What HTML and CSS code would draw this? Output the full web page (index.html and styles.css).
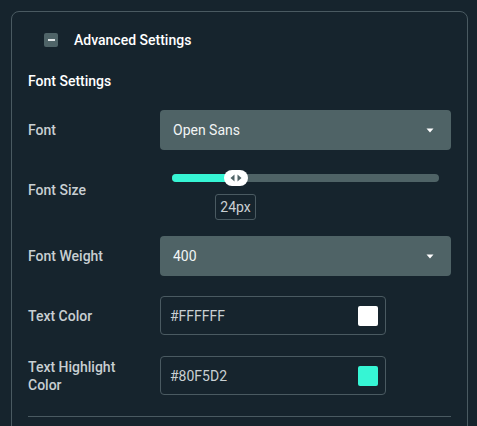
FILE: index.html
```html
<!DOCTYPE html>
<html lang="en">
<head>
<meta charset="utf-8">
<title>Advanced Settings</title>
<link rel="stylesheet" href="styles.css">
</head>
<body>
<section class="panel">
  <div class="panel-header">
    <span class="collapse-box"><span class="collapse-minus"></span></span>
    <span class="panel-title">Advanced Settings</span>
  </div>
  <h3 class="group-title">Font Settings</h3>

  <div class="row row-font">
    <label class="row-label">Font</label>
    <div class="select">
      <span class="select-value">Open Sans</span>
      <svg class="caret" width="8" height="5" viewBox="0 0 8 5"><path d="M0.5 0.5h7L4 4.5z" fill="#ffffff"/></svg>
    </div>
  </div>

  <div class="row row-size">
    <label class="row-label label-size">Font Size</label>
    <div class="slider">
      <div class="track">
        <div class="track-fill" style="width: 62px"></div>
        <div class="thumb" style="left: 52px">
          <svg width="12" height="8" viewBox="0 0 12 8"><path d="M4.5 0.5v7L0.5 4z" fill="#4f6366"/><path d="M7.5 0.5v7l4-3.5z" fill="#4f6366"/></svg>
        </div>
      </div>
      <div class="value-row" style="padding-left: 43px">
        <span class="value-box">24px</span>
      </div>
    </div>
  </div>

  <div class="row row-weight">
    <label class="row-label">Font Weight</label>
    <div class="select">
      <span class="select-value">400</span>
      <svg class="caret" width="8" height="5" viewBox="0 0 8 5"><path d="M0.5 0.5h7L4 4.5z" fill="#ffffff"/></svg>
    </div>
  </div>

  <div class="row row-color">
    <label class="row-label">Text Color</label>
    <div class="color-input">
      <span class="color-value">#FFFFFF</span>
      <span class="swatch swatch-white"></span>
    </div>
  </div>

  <div class="row row-highlight">
    <label class="row-label label-two">Text Highlight<br>Color</label>
    <div class="color-input">
      <span class="color-value">#80F5D2</span>
      <span class="swatch swatch-teal"></span>
    </div>
  </div>

  <hr class="divider">
</section>
</body>
</html>
```

FILE: styles.css
```css
* { box-sizing: border-box; }

html, body {
  margin: 0;
  padding: 0;
  background: #16242d;
  height: 426px;
  overflow: hidden;
}

body {
  font-family: Roboto, "Liberation Sans", sans-serif;
  color: #ffffff;
  padding: 11px 0 0 11px;
}

.panel {
  width: 457px;
  border: 1px solid #4a5a61;
  border-radius: 8px;
  padding: 18px 16px 40px 16px;
}

.panel-header {
  display: flex;
  align-items: center;
  height: 20px;
  margin-left: 16px;
  gap: 16px;
}

.collapse-box {
  width: 14px;
  height: 14px;
  border-radius: 2px;
  background: #4f6468;
  display: flex;
  align-items: center;
  justify-content: center;
}

.collapse-minus {
  width: 7px;
  height: 2px;
  background: #dfe5e6;
}

.panel-title {
  font-size: 14px;
  font-weight: 500;
  line-height: 20px;
  color: #ffffff;
}

.group-title {
  margin: 21px 0 0 0;
  font-size: 14px;
  font-weight: 500;
  line-height: 20px;
  color: #ffffff;
}

.row {
  display: grid;
  grid-template-columns: 132px 291px;
  align-items: center;
}

.row-font { margin-top: 19px; }
.row-size { margin-top: 20px; align-items: start; }
.row-weight { margin-top: 16px; }
.row-color { margin-top: 20px; }
.row-highlight { margin-top: 21px; }

.row-label {
  font-size: 14px;
  font-weight: 500;
  line-height: 18px;
  color: #c8cfd2;
}

.label-size { margin-top: 11px; }

.select {
  height: 40px;
  background: #4f6366;
  border-radius: 4px;
  display: flex;
  align-items: center;
  justify-content: space-between;
  padding: 0 17px 0 13px;
}

.select-value {
  font-size: 14px;
  color: #f2f5f5;
}

.caret { display: block; }

.slider {
  padding: 4px 12px 0 12px;
}

.track {
  position: relative;
  height: 8px;
  border-radius: 4px;
  background: #4f6366;
}

.track-fill {
  height: 8px;
  border-radius: 4px;
  background: #36f5d4;
}

.thumb {
  position: absolute;
  top: -4px;
  width: 24px;
  height: 16px;
  border-radius: 8px;
  background: #ffffff;
  display: flex;
  align-items: center;
  justify-content: center;
}

.thumb svg { display: block; }

.value-row {
  margin-top: 12px;
  display: flex;
}

.value-box {
  display: inline-flex;
  align-items: center;
  justify-content: center;
  width: 41px;
  height: 26px;
  border: 1px solid #4a5a61;
  border-radius: 3px;
  font-size: 14px;
  color: #c9d0d3;
}

.color-input {
  width: 226px;
  height: 39px;
  border: 1px solid #4a5a61;
  border-radius: 4px;
  display: flex;
  align-items: center;
  justify-content: space-between;
  padding: 0 7px 0 9px;
}

.color-value {
  font-size: 14px;
  color: #c9d0d3;
}

.swatch {
  width: 20px;
  height: 20px;
  border-radius: 2px;
}

.swatch-white { background: #ffffff; }
.swatch-teal { background: #36f5d4; }

.divider {
  margin: 21px 0 0 0;
  border: 0;
  height: 1px;
  background: #4a5a61;
}
```
